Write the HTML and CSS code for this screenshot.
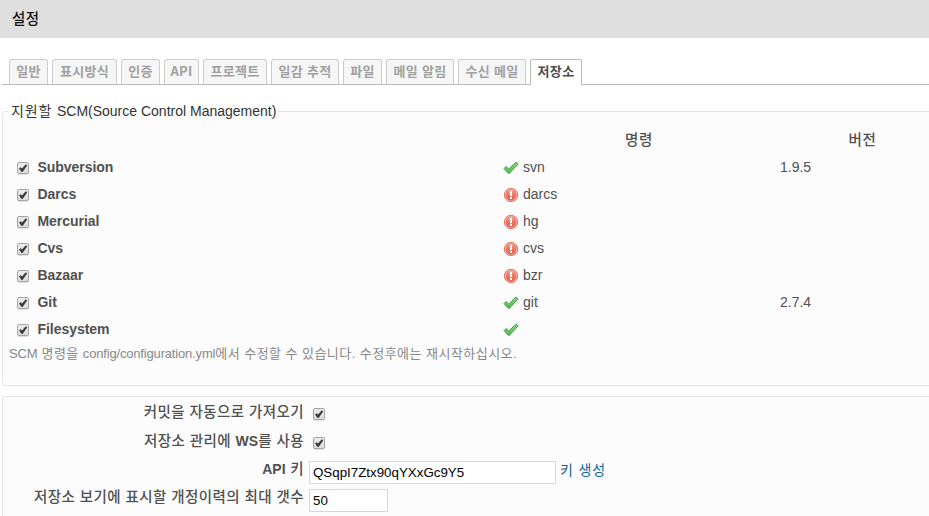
FILE: index.html
```
<!DOCTYPE html>
<html lang="ko">
<head>
<meta charset="utf-8">
<title>설정</title>
<link rel="stylesheet" href="styles.css">
</head>
<body>
<svg class="defs" aria-hidden="true">
  <defs>
    <linearGradient id="box" x1="0" y1="0" x2="0" y2="1"><stop offset="0" stop-color="#ededed"/><stop offset="1" stop-color="#dcdcdc"/></linearGradient>
    <linearGradient id="red" x1="0" y1="0" x2="0" y2="1"><stop offset="0" stop-color="#f0917f"/><stop offset="1" stop-color="#e65c4b"/></linearGradient>
    <linearGradient id="green" x1="0" y1="0" x2="0" y2="1"><stop offset="0" stop-color="#8bd87c"/><stop offset="1" stop-color="#4aba4c"/></linearGradient>
    <symbol id="check" viewBox="0 0 13 14">
      <rect x=".5" y="1.6" width="11" height="11" rx="1.5" fill="none" stroke="#dedede"/>
      <rect x=".5" y=".5" width="11" height="11" rx="1.5" fill="url(#box)" stroke="#a6a6a6"/>
      <path d="M2 6.6 3.5 5.2 5 6.6 8.8 2.2 10.2 3.4 5.6 9.9 4.3 9.8Z" fill="#3c3c3c"/>
    </symbol>
    <symbol id="ok" viewBox="0 0 16 14">
      <path d="M1 7.6 3.1 5.5 5.7 8 13.1 1.1 15.2 2.9 5.9 12.8Z" fill="url(#green)" stroke="#38993b" stroke-width=".9" stroke-linejoin="round"/>
    </symbol>
    <symbol id="error" viewBox="0 0 16 16">
      <circle cx="8" cy="8" r="6.7" fill="#f6b3a6" stroke="#d4604f" stroke-width=".8"/>
      <circle cx="8" cy="8" r="5.4" fill="url(#red)"/>
      <path d="M6.8 3.8H9.2L8.9 9.2H7.1ZM7 10.1H9V12H7Z" fill="#fff"/>
    </symbol>
  </defs>
</svg>
<header class="title">설정</header>
<nav class="tabs">
  <a class="tab w39">일반</a><a class="tab w65">표시방식</a><a class="tab w39">인증</a><a class="tab w35">API</a><a class="tab w64">프로젝트</a><a class="tab w68">일감 추적</a><a class="tab w39">파일</a><a class="tab w68">메일 알림</a><a class="tab w68">수신 메일</a><a class="tab w52 selected">저장소</a>
</nav>
<main>
  <section class="box scm">
    <h2 class="legend"><span class="ko">지원할 </span>SCM(Source Control Management)</h2>
    <div class="grid head"><b></b><b>명령</b><b>버전</b></div>
    <div class="grid"><label><svg class="cb"><use href="#check"/></svg>Subversion</label><span><svg class="ic ok"><use href="#ok"/></svg>svn</span><span>1.9.5</span></div>
    <div class="grid"><label><svg class="cb"><use href="#check"/></svg>Darcs</label><span><svg class="ic"><use href="#error"/></svg>darcs</span></div>
    <div class="grid"><label><svg class="cb"><use href="#check"/></svg>Mercurial</label><span><svg class="ic"><use href="#error"/></svg>hg</span></div>
    <div class="grid"><label><svg class="cb"><use href="#check"/></svg>Cvs</label><span><svg class="ic"><use href="#error"/></svg>cvs</span></div>
    <div class="grid"><label><svg class="cb"><use href="#check"/></svg>Bazaar</label><span><svg class="ic"><use href="#error"/></svg>bzr</span></div>
    <div class="grid"><label><svg class="cb"><use href="#check"/></svg>Git</label><span><svg class="ic ok"><use href="#ok"/></svg>git</span><span>2.7.4</span></div>
    <div class="grid"><label><svg class="cb"><use href="#check"/></svg>Filesystem</label><span><svg class="ic ok"><use href="#ok"/></svg></span></div>
    <p class="note"><span class="path">SCM</span> 명령을 <span class="path">config/configuration.yml</span>에서 수정할 수 있습니다. 수정후에는 재시작하십시오.</p>
  </section>
  <section class="box form">
    <div class="row"><b>커밋을 자동으로 가져오기</b><svg class="cb"><use href="#check"/></svg></div>
    <div class="row"><b>저장소 관리에 <span class="latin">WS</span>를 사용</b><svg class="cb"><use href="#check"/></svg></div>
    <div class="row short"><b><span class="latin">API</span> 키</b><input class="key" value="QSqpI7Ztx90qYXxGc9Y5"><a class="link">키 생성</a></div>
    <div class="row short"><b>저장소 보기에 표시할 개정이력의 최대 갯수</b><input class="num" value="50"></div>
  </section>
</main>
</body>
</html>
```
FILE: styles.css
```
* { box-sizing: border-box; }
body { margin: 0; height: 516px; overflow: hidden; background: #fff; color: #505050; font: 14px/20px "Liberation Sans", "Noto Sans CJK KR", sans-serif; white-space: nowrap; }
.defs { position: absolute; width: 0; height: 0; }

.title { height: 38px; padding-left: 12px; background: #dfdfdf; color: #111; font-weight: 500; font-size: 14.5px; line-height: 38px; letter-spacing: .5px; }

.tabs { display: flex; gap: 4px; height: 26px; margin: 21px 0 26px 2px; padding-left: 7px; border-bottom: 1px solid #bbb; }
.tab { height: 25px; border: 1px solid #ccc; border-bottom: 0; border-radius: 3px 3px 0 0; background: #f6f6f6; color: #a0a0a0; font: 700 13px/21px "Noto Sans CJK KR", sans-serif; text-align: center; letter-spacing: .3px; }
.selected { height: 26px; background: #fff; color: #4c4c4c; border-color: #bbb; }
.w35 { width: 35px; }
.w39 { width: 39px; }
.w52 { width: 52px; }
.w64 { width: 64px; }
.w65 { width: 65px; }
.w68 { width: 68px; }

main { width: 950px; padding-left: 2px; }
.box { border: 1px solid #e4e4e4; border-radius: 3px; background: #fcfcfc; }
.scm { height: 275px; padding-left: 6px; }
.legend { margin: -11px 0 5px; width: max-content; padding: 0 2px; background: linear-gradient(#fff 50%, #fcfcfc 50%); font-size: 14px; font-weight: 400; line-height: 20px; color: #333; }
.ko { letter-spacing: .85px; }
.grid { display: grid; grid-template-columns: 494px 277px 170px; height: 27px; align-items: center; }
.grid > label, .grid > span { display: flex; align-items: center; }
.grid > label { padding-left: 8px; font-weight: 700; letter-spacing: -.05px; }
.head > b { font-weight: 500; font-size: 14.5px; letter-spacing: .6px; text-align: center; padding-right: 5px; }
.cb { width: 13px; height: 14px; flex: none; margin-right: 7.5px; position: relative; top: 2px; }
.ic { width: 16px; height: 16px; flex: none; margin-right: 4px; position: relative; top: 1px; }
.ok { height: 14px; }
.note { margin: 2px 0 0; font-size: 13px; color: #888; line-height: 20px; letter-spacing: .46px; }
.path { letter-spacing: -.17px; }

.form { margin-top: 10px; height: 120px; padding-top: 1px; border-bottom: 0; border-radius: 3px 3px 0 0; }
.row { display: flex; align-items: center; height: 29px; }
.row > b { width: 301px; margin-right: 5px; text-align: right; font-weight: 500; font-size: 14.5px; letter-spacing: .42px; position: relative; top: -1px; }
.row .latin { font-weight: 700; font-size: 14px; letter-spacing: .1px; }
.row .cb { margin-left: 4px; }
.short { height: 28px; }
input { height: 23px; padding: 1px 3px; border: 1px solid #d7d7d7; border-radius: 0; background: #fff; color: #000; font: 13.33px "Liberation Sans", sans-serif; position: relative; top: 2px; }
.key { width: 247px; }
.num { width: 79px; }
.link { margin-left: 4px; color: #169; letter-spacing: .9px; }
```
